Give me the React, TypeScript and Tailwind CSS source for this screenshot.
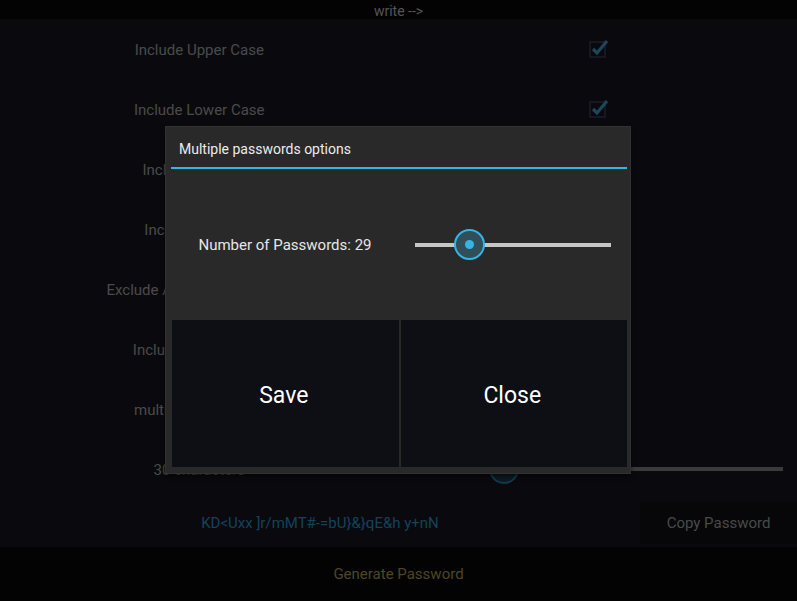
const password = "KD<Uxx ]r/mMT#-=bU}&}qE&h y+nN";

export default function App() {
  const rows = [
    { label: "Include Upper Case", kind: "check" },
    { label: "Include Lower Case", kind: "check" },
    { label: "Include Numbers", kind: "check" },
    { label: "Include Symbols", kind: "check" },
    { label: "Exclude Ambiguous Symbol", kind: "check" },
    { label: "Include Punctuation", kind: "check" },
    { label: "multiple passwords", kind: "none" },
    { label: "30 characters", kind: "slider" },
  ];

  return (
    <div className="relative h-[601px] w-full overflow-hidden bg-[#0a0a0e] font-['Roboto',sans-serif]">
      {/* top bar */}
      <div className="flex h-[19px] items-center justify-center bg-[#030303] pt-[3px] text-[14px] text-[#555]">
        write --&gt;
      </div>

      {/* option rows */}
      {rows.map((r) => (
        <div key={r.label} className="grid h-[60px] grid-cols-2 items-center">
          <div className="pt-[2px] text-center text-[15px] text-[#4a4a4a]">{r.label}</div>
          <div className="flex items-center justify-center">
            {r.kind === "check" && (
              <svg width="22" height="22" viewBox="0 0 22 22" className="ml-[2px]">
                <rect x="2" y="4" width="15" height="15" fill="none" stroke="#1b1e23" strokeWidth="1.5" />
                <path d="M5 11 L9 15 L19 3" fill="none" stroke="#1b475c" strokeWidth="3.2" />
              </svg>
            )}
            {r.kind === "slider" && (
              <div className="relative mr-[14px] ml-[17px] h-[4px] w-full bg-[#3a3a3a]">
                <div className="absolute top-[-13px] left-[73px] h-[30px] w-[30px] rounded-full border-2 border-[#0f3a4b] bg-[#0c1a20]" />
              </div>
            )}
          </div>
        </div>
      ))}

      {/* password row */}
      <div className="flex h-[48px] items-center">
        <div className="flex-1 text-center text-[15px] text-[#13435a]">{password}</div>
        <div className="flex h-[42px] w-[157px] items-center justify-center bg-[#070709] text-[15px] text-[#4a4a4a]">
          Copy Password
        </div>
      </div>

      {/* bottom bar */}
      <div className="flex h-[54px] items-center justify-center bg-[#030303] text-[15px] text-[#4d4526]">
        Generate Password
      </div>

      {/* dialog */}
      <div className="absolute top-[126px] left-[165px] flex h-[348px] w-[466px] flex-col border border-[#323232] bg-[#292929] pr-[3px] pl-[5px] shadow-[0_2px_4px_rgba(0,0,0,0.6)]">
        <div className="flex h-[40px] items-center pl-[8px] pt-[5px] text-[14px] text-[#ececec]">
          Multiple passwords options
        </div>
        <div className="h-[2px] bg-[#33b5e5]" />
        <div className="grid h-[151px] grid-cols-2 items-center">
          <div className="pt-[2px] text-center text-[15px] text-[#e6e6e6]">Number of Passwords: 29</div>
          <div className="relative mx-[16px] h-[4px] bg-[#c6c6c6]">
            <div className="absolute top-[-14px] left-[39px] flex h-[31px] w-[31px] items-center justify-center rounded-full border-2 border-[#33b5e5] bg-[#324e59]">
              <div className="h-[9px] w-[9px] rounded-full bg-[#33b5e5]" />
            </div>
          </div>
        </div>
        <div className="mb-[6px] flex flex-1 gap-[2px] pl-[1px]">
          <div className="flex flex-1 items-center justify-center bg-[#0e0f14] pt-[5px] pr-[3px] text-[23px] text-white">Save</div>
          <div className="flex flex-1 items-center justify-center bg-[#0e0f14] pt-[5px] pr-[3px] text-[23px] text-white">Close</div>
        </div>
      </div>
    </div>
  );
}
